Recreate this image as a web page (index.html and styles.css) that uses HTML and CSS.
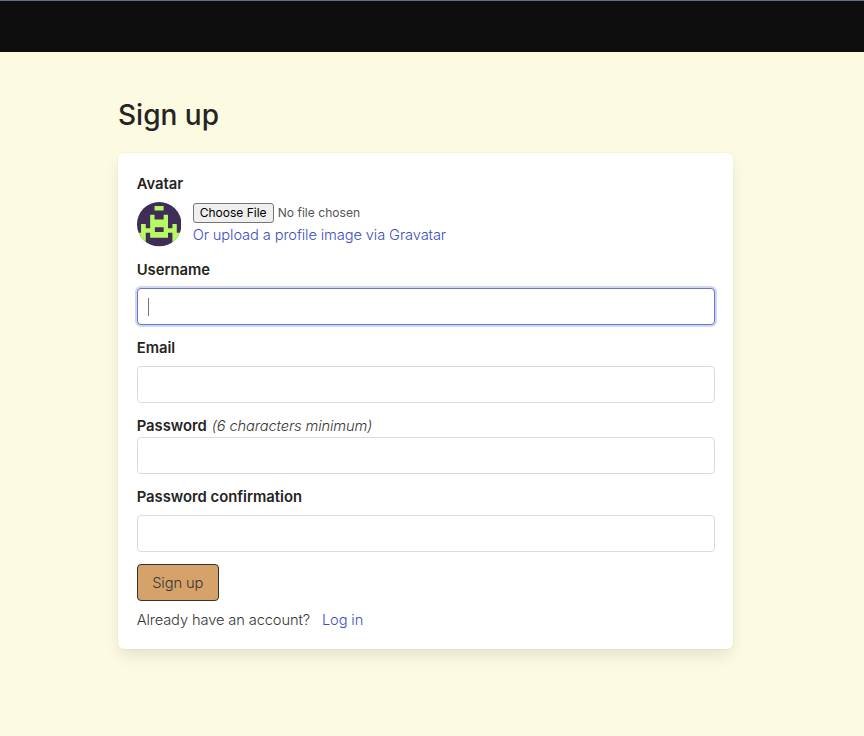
FILE: index.html
```html
<!DOCTYPE html>
<html lang="en">
<head>
<meta charset="utf-8">
<title>Sign up</title>
<link rel="stylesheet" href="styles.css">
</head>
<body>
<header class="navbar"></header>
<main class="container">
  <h1 class="title">Sign up</h1>
  <form class="box">
    <div class="label avatar-label">Avatar</div>
    <div class="media">
      <svg class="avatar" viewBox="0 0 132 132" aria-hidden="true">
        <defs><clipPath id="round"><circle cx="66" cy="66" r="66"/></clipPath></defs>
        <g clip-path="url(#round)">
          <rect width="132" height="132" fill="#3f2c57"/>
          <path fill="#b9f865" fill-rule="evenodd" d="M52 12h27v13H52zM39 38h13v14h27V38h13v40h13V65h13v26h14v41h-27V91H92v15H39V91H26v41H0V91h12V65h14v13h13zM53 75v14h26V75z"/>
        </g>
      </svg>
      <div class="upload">
        <div class="file"><button type="button" class="choose">Choose File</button><span class="file-name">No file chosen</span></div>
        <a class="link gravatar">Or upload a profile image via Gravatar</a>
      </div>
    </div>
    <label class="label username" for="username">Username</label>
    <div class="input focused" id="username"><span class="caret"></span></div>
    <label class="label" for="email">Email</label>
    <input class="input" id="email" type="email">
    <div class="password-row"><label class="label" for="password">Password</label> <em class="hint">(6 characters minimum)</em></div>
    <input class="input" id="password" type="password">
    <label class="label" for="confirmation">Password confirmation</label>
    <input class="input" id="confirmation" type="password">
    <button type="button" class="submit">Sign up</button>
    <p class="login"><span class="question">Already have an account?</span><a class="link">Log in</a></p>
  </form>
</main>
</body>
</html>
```
FILE: styles.css
```css
* { box-sizing: border-box; }
body {
  margin: 0;
  min-height: 736px;
  background: #fcfae1;
  color: #363636;
  font: 300 14.7px/22px Inter, "Liberation Sans", sans-serif;
  letter-spacing: -0.13px;
}
.navbar {
  height: 52px;
  background: #0e0e0e;
  border-top: 1px solid #627184;
}
.container { width: 615px; margin-left: 118px; padding-top: 47px; }
.title {
  margin: 0 0 22px;
  font-size: 28px;
  line-height: 32px;
  font-weight: 500;
  letter-spacing: 0;
  color: #242424;
}
.box {
  height: 496px;
  padding: 20px 18.7px;
  background: #fff;
  border-radius: 6px;
  box-shadow: 0 8px 16px -2px rgba(10, 10, 10, .1), 0 0 0 1px rgba(10, 10, 10, .02);
}
.label {
  display: block;
  font-size: 14.8px;
  font-weight: 600;
  letter-spacing: 0;
  line-height: 22px;
  color: #242424;
}
.media { display: flex; height: 45px; margin-top: 7px; }
.avatar { width: 44.5px; height: 44.5px; margin-right: 11.5px; flex: none; }
.file { display: flex; align-items: center; height: 20px; margin-top: 1px; letter-spacing: 0; }
.choose {
  width: 81px;
  height: 20px;
  padding: 0;
  border: 1px solid #767676;
  border-radius: 3px;
  background: #efefef;
  color: #000;
  font: 400 12px/16px Inter, sans-serif;
}
.file-name { margin-left: 4px; font-size: 12.1px; font-weight: 400; color: #555; }
.link { color: #3c50c2; text-decoration: none; }
.gravatar { display: block; line-height: 22px; margin-top: 1px; }
.username { margin-top: 12px; }
.input {
  display: flex;
  align-items: center;
  width: 578px;
  height: 37px;
  margin: 7px 0 12px;
  padding: 0 10px;
  border: 1px solid #dbdbdb;
  border-radius: 4px;
  background: #fff;
  outline: none;
}
.focused { height: 37px; border-color: #6874ce; box-shadow: 0 0 0 2px rgba(72, 95, 199, .25); }
.caret { width: 1px; height: 18px; background: #777; }
.password-row { display: flex; gap: 5px; padding-top: .4px; }
#password { margin-top: 0; }
.submit {
  display: block;
  width: 82px;
  height: 37px;
  padding: 0;
  border: 1px solid #333;
  border-radius: 4px;
  background: #d5a26a;
  color: #363636;
  font: 300 14.7px/22px Inter, sans-serif;
  letter-spacing: -0.13px;
}
.login { margin: 8px 0 0; }
.question { margin-right: 12px; }
```
